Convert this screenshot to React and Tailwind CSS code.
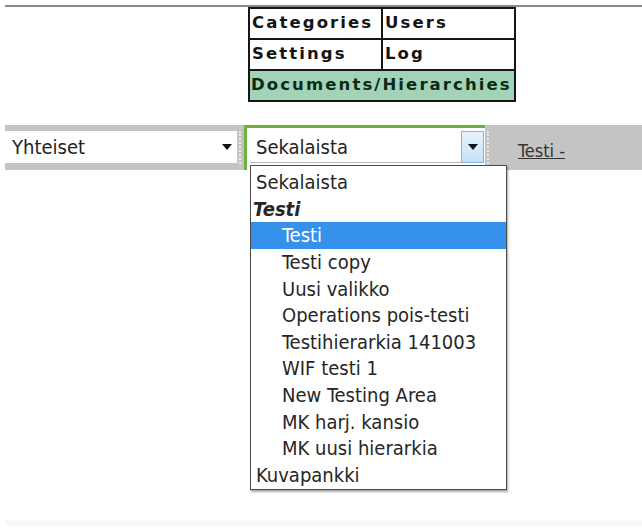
const TOOLS = [
  ["Categories", "Users"],
  ["Settings", "Log"],
];

const HIERARCHIES = [
  { label: "Sekalaista" },
  { label: "Testi", group: true },
  { label: "Testi", indent: true, active: true },
  { label: "Testi copy", indent: true },
  { label: "Uusi valikko", indent: true },
  { label: "Operations pois-testi", indent: true },
  { label: "Testihierarkia 141003", indent: true },
  { label: "WIF testi 1", indent: true },
  { label: "New Testing Area", indent: true },
  { label: "MK harj. kansio", indent: true },
  { label: "MK uusi hierarkia", indent: true },
  { label: "Kuvapankki" },
];

function Caret({ className = "" }) {
  return (
    <svg width="10" height="6" viewBox="0 0 10 6" className={className}>
      <path d="M0 0h10L5 6z" fill="#111" />
    </svg>
  );
}

function ToolMenu() {
  return (
    <div className="ml-[243px] w-[268px] border-2 border-[#151515] font-['DejaVu_Sans',sans-serif] font-stretch-normal text-[16.5px] font-bold tracking-[2.1px] text-[#141414]">
      {TOOLS.map(([left, right]) => (
        <div key={left} className="flex h-[31px] border-b-2 border-[#151515]">
          <div className="flex w-[133px] items-center border-r-2 border-[#151515] bg-white pl-[2px]">{left}</div>
          <div className="flex flex-1 items-center bg-white pl-[2px]">{right}</div>
        </div>
      ))}
      <div className="flex h-[29px] items-center bg-[#a3d3b7] pl-[1px] text-[#0b2a18]">Documents/Hierarchies</div>
    </div>
  );
}

function HierarchyList() {
  return (
    <div className="absolute left-[3px] top-[37px] z-10 w-[257px] border border-[#4a4a4a] bg-white pb-[1px] pt-[3px] shadow-[1px_2px_2px_rgba(0,0,0,0.35)]">
      {HIERARCHIES.map((item, i) => (
        <div
          key={i}
          className={
            "flex h-[26.6px] items-center whitespace-nowrap " +
            (item.indent ? "pl-[31px] " : item.group ? "pl-[2px] " : "pl-[5px] ") +
            (item.group ? "font-bold italic text-[#111] " : "") +
            (item.active ? "bg-[#3591ea] text-white" : "text-[#262626]")
          }
        >
          {item.label}
        </div>
      ))}
    </div>
  );
}

export default function App() {
  return (
    <div className="flex h-[528px] w-[642px] flex-col bg-white font-['DejaVu_Sans',sans-serif] font-stretch-semi-condensed text-[20px] text-[#222]">
      <div className="ml-[5px] mt-[5px] border-t-2 border-[#8a8a8a]">
        <ToolMenu />
      </div>

      <div className="ml-[5px] mt-[23px] flex h-[45px] items-stretch bg-[#c4c4c4]">
        <div className="mt-[6px] flex h-[32px] w-[232px] items-center justify-between bg-white pl-[7px] pr-[5px]">
          <span>Yhteiset</span>
          <Caret />
        </div>
        <div className="mx-[2px] my-[6px] w-[3px] border-l-2 border-dotted border-[#eeeeee]" />

        <div className="relative w-[241px] border-l-[3px] border-t-[3px] border-[#6cb23a] bg-white pl-[3px] pt-[3px]">
          <div className="flex h-[32px] w-[234px] items-center justify-between border-b border-[#b5b5b5] bg-white pl-[6px]">
            <span>Sekalaista</span>
            <div className="flex h-[32px] w-[23px] items-center justify-center border border-[#80b5e6] bg-gradient-to-b from-[#e6f3fd] to-[#c6e2f8]">
              <Caret />
            </div>
          </div>
          <HierarchyList />
        </div>
        <div className="mx-[2px] my-[6px] w-[3px] border-l-2 border-dotted border-[#eeeeee]" />

        <a className="ml-[26px] mt-[12px] text-[18px] text-[#333] underline">Testi -</a>
      </div>

      <div className="mb-[2px] ml-[5px] mt-auto h-[6px] bg-[#f8f8f8]" />
    </div>
  );
}
